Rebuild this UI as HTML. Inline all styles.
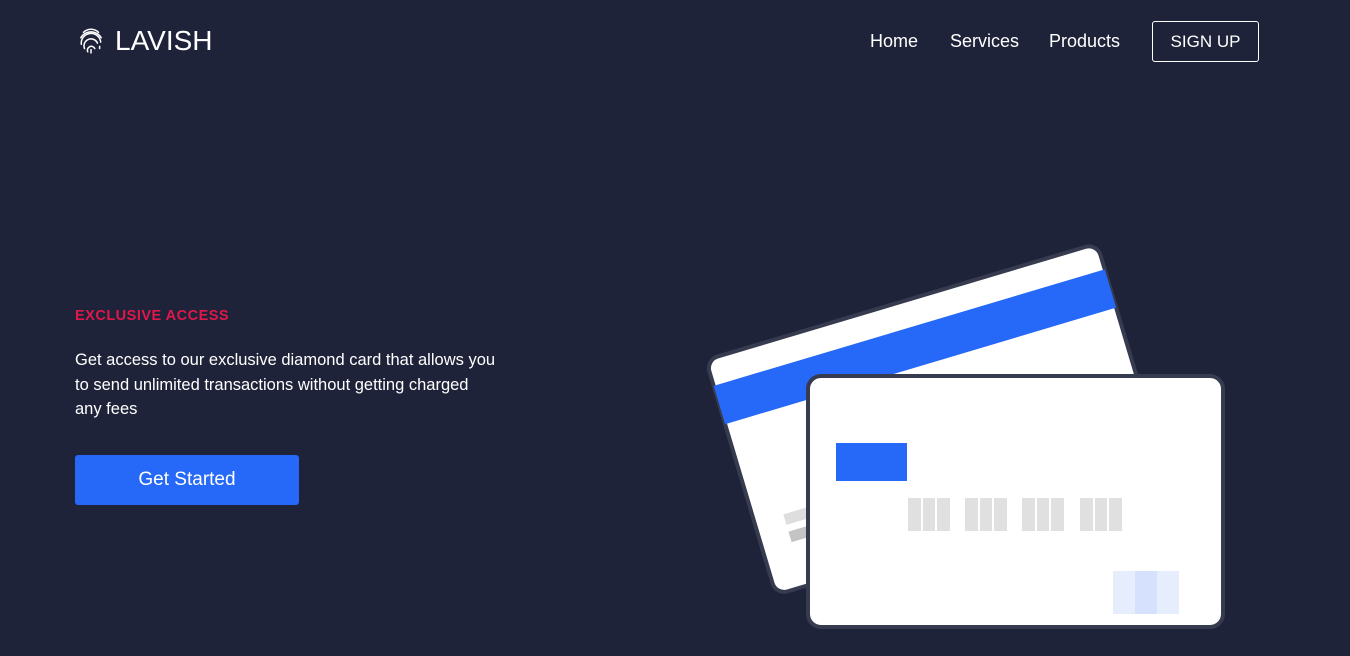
<!DOCTYPE html>
<html><head><style>
body{margin:0;width:1350px;height:656px;background:#1f2339;font-family:"Liberation Sans",sans-serif;color:#fff;position:relative;overflow:hidden}
.a{position:absolute;white-space:nowrap}
</style></head><body>
<svg class="a" style="left:78px;top:27px" width="26" height="28" viewBox="0 0 24 26" fill="none" stroke="#fff" stroke-width="1.4" stroke-linecap="round">
<path d="M5 5a10 10 0 0 1 14 0"/><path d="M2.5 10a11 11 0 0 1 19 0"/><path d="M3 16a9 9 0 0 1 18-2"/><path d="M6 20a6.5 6.5 0 0 1 12-5"/><path d="M9 23a3.5 3.5 0 0 1 6.5-3"/><path d="M12 24v-3"/><path d="M20 18v2"/></svg>
<div class="a" style="left:115px;top:25px;font-size:28px">LAVISH</div>
<div class="a" style="left:870px;top:31px;font-size:18px">Home</div>
<div class="a" style="left:950px;top:31px;font-size:18px">Services</div>
<div class="a" style="left:1049px;top:31px;font-size:18px">Products</div>
<div class="a" style="left:1152px;top:21px;width:105px;height:39px;border:1px solid #fff;border-radius:3px;font-size:17px;text-align:center;line-height:39px">SIGN UP</div>
<div class="a" style="left:75px;top:308px;font-size:14.5px;font-weight:bold;color:#e0174a;letter-spacing:.5px">EXCLUSIVE ACCESS</div>
<div class="a" style="left:75px;top:348px;font-size:16.5px;line-height:24.5px">Get access to our exclusive diamond card that allows you<br>to send unlimited transactions without getting charged<br>any fees</div>
<div class="a" style="left:75px;top:455px;width:224px;height:50px;background:#2668f7;border-radius:3px;font-size:19px;text-align:center;line-height:50px">Get Started</div>
<svg class="a" style="left:0;top:0" width="1350" height="656">
<g transform="translate(706,360) rotate(-16.6)">
<rect x="0" y="0" width="408" height="245" rx="12" fill="#fff" stroke="#363b4f" stroke-width="4"/>
<rect x="0" y="27" width="408" height="40" fill="#2668f7"/>
<rect x="30" y="170" width="42" height="11" fill="#dedede"/>
<rect x="30" y="188" width="42" height="11" fill="#c4c4c4"/>
</g>
<rect x="808" y="376" width="415" height="251" rx="13" fill="#fff" stroke="#363b4f" stroke-width="4"/>
<rect x="836" y="443" width="71" height="38" fill="#2668f7"/>
<g fill="#e0e0e0">
<rect x="908" y="498" width="13" height="33"/><rect x="923" y="498" width="12" height="33"/><rect x="937" y="498" width="13" height="33"/>
<rect x="965" y="498" width="13" height="33"/><rect x="980" y="498" width="12" height="33"/><rect x="994" y="498" width="13" height="33"/>
<rect x="1022" y="498" width="13" height="33"/><rect x="1037" y="498" width="12" height="33"/><rect x="1051" y="498" width="13" height="33"/>
<rect x="1080" y="498" width="13" height="33"/><rect x="1095" y="498" width="12" height="33"/><rect x="1109" y="498" width="13" height="33"/>
</g>
<rect x="1113" y="571" width="66" height="43" fill="#e6eefe"/>
<rect x="1135" y="571" width="22" height="43" fill="#d6e2fd"/>
</svg>
</body></html>
